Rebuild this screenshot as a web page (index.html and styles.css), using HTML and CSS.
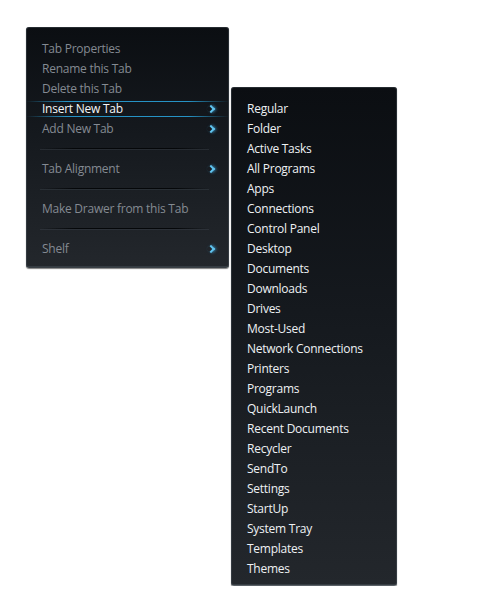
FILE: index.html
```html
<!DOCTYPE html>
<html>
<head>
<meta charset="utf-8">
<link rel="stylesheet" href="styles.css">
</head>
<body>
<div class="stage">
  <div class="menu main">
    <div class="item">Tab Properties</div>
    <div class="item">Rename this Tab</div>
    <div class="item">Delete this Tab</div>
    <div class="item active">Insert New Tab<span class="arrow"></span></div>
    <div class="item">Add New Tab<span class="arrow"></span></div>
    <div class="sep"></div>
    <div class="item">Tab Alignment<span class="arrow"></span></div>
    <div class="sep"></div>
    <div class="item">Make Drawer from this Tab</div>
    <div class="sep"></div>
    <div class="item">Shelf<span class="arrow"></span></div>
  </div>
  <div class="menu sub">
    <div class="item">Regular</div>
    <div class="item">Folder</div>
    <div class="item">Active Tasks</div>
    <div class="item">All Programs</div>
    <div class="item">Apps</div>
    <div class="item">Connections</div>
    <div class="item">Control Panel</div>
    <div class="item">Desktop</div>
    <div class="item">Documents</div>
    <div class="item">Downloads</div>
    <div class="item">Drives</div>
    <div class="item">Most-Used</div>
    <div class="item">Network Connections</div>
    <div class="item">Printers</div>
    <div class="item">Programs</div>
    <div class="item">QuickLaunch</div>
    <div class="item">Recent Documents</div>
    <div class="item">Recycler</div>
    <div class="item">SendTo</div>
    <div class="item">Settings</div>
    <div class="item">StartUp</div>
    <div class="item">System Tray</div>
    <div class="item">Templates</div>
    <div class="item">Themes</div>
  </div>
</div>
</body>
</html>
```

FILE: styles.css
```css
html, body {
  margin: 0;
  padding: 0;
  background: #ffffff;
}
body {
  font-family: "Open Sans", "Noto Sans", sans-serif;
  font-size: 12px;
}
.stage {
  display: flex;
  align-items: flex-start;
  padding: 27px 0 0 26px;
  gap: 2px;
}
.menu {
  background: linear-gradient(180deg, #0b0e12 0%, #15191e 45%, #23272c 100%);
  border-radius: 3px;
  box-shadow: 0 0 0 1px rgba(90, 100, 110, 0.35) inset, 0 1px 1px rgba(0,0,0,0.5);
  position: relative;
}
.main {
  width: 203px;
  padding: 12px 0 8px;
  border-bottom: 1px solid #3a4046;
}
.sub {
  margin-top: 60px;
  width: 166px;
  padding: 12px 0 6px;
  border-bottom: 1px solid #5a6066;
}
.item {
  height: 20px;
  line-height: 20px;
  padding-left: 16px;
  position: relative;
  white-space: nowrap;
  letter-spacing: -0.25px;
}
.main .item {
  color: #848a92;
}
.main .item.active {
  color: #f4f6f8;
  background:
    linear-gradient(90deg, rgba(40,150,200,0) 0%, rgba(40,160,215,0.9) 20%, rgba(40,160,215,0.9) 80%, rgba(40,150,200,0) 100%) top 2px left 0 / 100% 1px no-repeat,
    linear-gradient(90deg, rgba(40,150,200,0) 0%, rgba(40,160,215,0.9) 20%, rgba(40,160,215,0.9) 80%, rgba(40,150,200,0) 100%) bottom 2px left 0 / 100% 1px no-repeat;
}
.sub .item {
  padding-left: 16px;
  color: #eef1f4;
}
.arrow {
  position: absolute;
  right: 15px;
  top: 7px;
  width: 4px;
  height: 4px;
  border-top: 2px solid #5fc4f0;
  border-right: 2px solid #5fc4f0;
  transform: rotate(45deg);
  box-shadow: 1px -1px 3px rgba(60, 170, 230, 0.6);
}
.sep {
  height: 20px;
  position: relative;
}
.sep::before {
  content: "";
  position: absolute;
  left: 14px;
  right: 20px;
  top: 9px;
  height: 1px;
  background: linear-gradient(90deg, rgba(0,0,0,0), #050709 20%, #050709 80%, rgba(0,0,0,0));
  box-shadow: 0 1px 0 rgba(70, 78, 86, 0.35);
}
```
